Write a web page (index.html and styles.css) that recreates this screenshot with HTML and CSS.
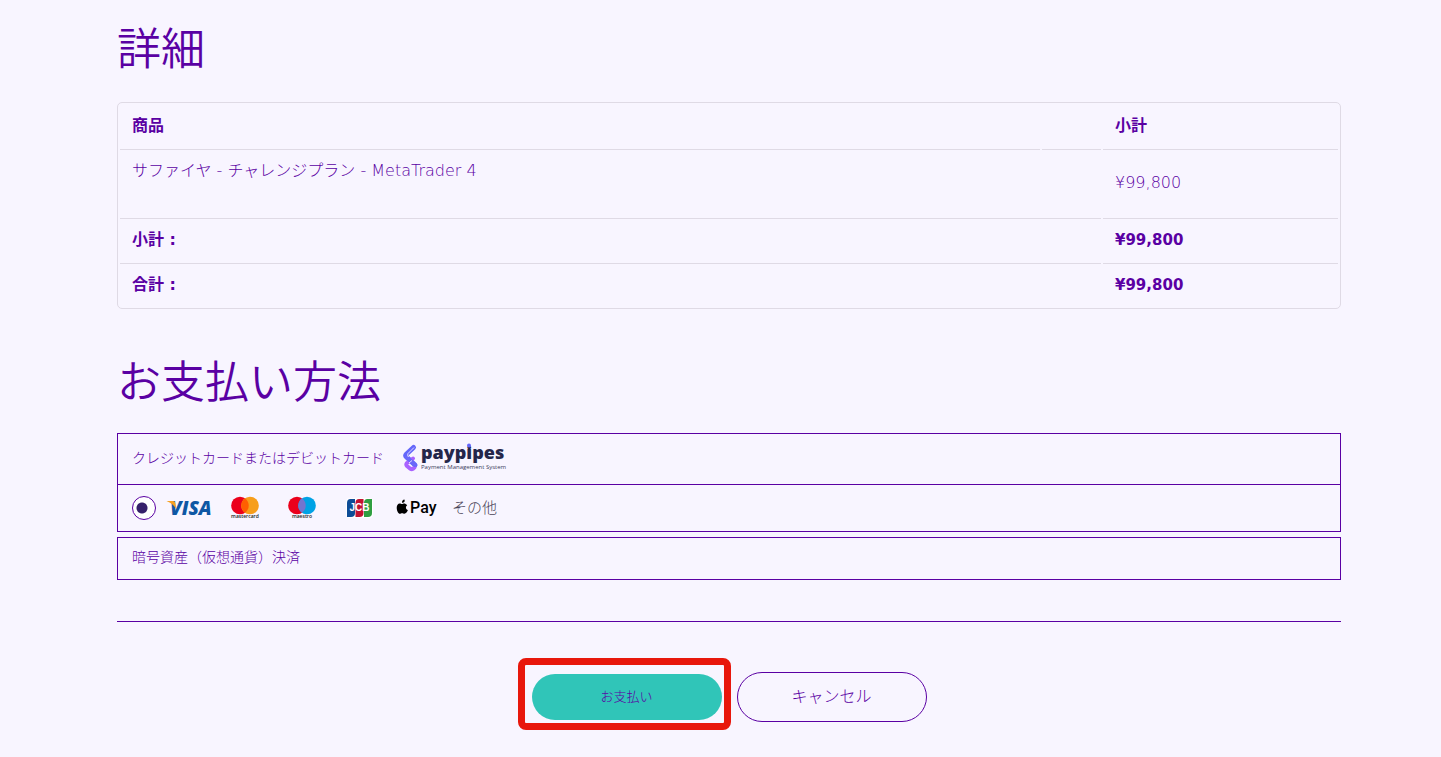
FILE: index.html
```html
<!DOCTYPE html>
<html lang="ja">
<head>
  <meta charset="utf-8">
  <title>お支払い方法</title>
  <link rel="stylesheet" href="styles.css">
</head>
<body>
  <main class="container">
    <h1>詳細</h1>

    <table class="order-table">
      <thead>
        <tr>
          <th>商品</th>
          <th class="col-qty"></th>
          <th class="col-total">小計</th>
        </tr>
      </thead>
      <tbody>
        <tr>
          <td class="product-name">サファイヤ - チャレンジプラン - MetaTrader 4</td>
          <td></td>
          <td>¥99,800</td>
        </tr>
      </tbody>
      <tfoot>
        <tr>
          <th colspan="2">小計 :</th>
          <td>¥99,800</td>
        </tr>
        <tr>
          <th colspan="2">合計 :</th>
          <td>¥99,800</td>
        </tr>
      </tfoot>
    </table>

    <h1>お支払い方法</h1>

    <form>
      <div class="method method-title">
        <label for="pay-card">クレジットカードまたはデビットカード</label>
        <svg class="paypipes" width="110" height="34" viewBox="0 0 110 34" role="img" aria-label="paypipes">
          <path d="M12.500 7.500 L5.500 14 Q4 15.500 5.500 17 L14 25" fill="none" stroke="#6366fa" stroke-width="5" stroke-linecap="round" stroke-linejoin="round"/>
          <path d="M12 18.500 L6 23 Q4.500 24.500 6 26 L9 28.500 Q11.500 30 13.500 27.500" fill="none" stroke="#a962ff" stroke-width="4" stroke-linecap="round" stroke-linejoin="round"/>
          <path d="M6 17.500 L14 25" fill="none" stroke="#6a68fa" stroke-width="4" stroke-linecap="round"/>
          <path d="M13 7.500 L7 13.500 Q6 15.500 7.500 17 M11 20.500 L8 23" fill="none" stroke="#e4dcff" stroke-width="1"/>
          <text class="paypipes-name" x="20" y="19">paypipes</text>
          <circle cx="68" cy="5.500" r="2" fill="#6366fa"/>
          <text class="paypipes-sub" x="20" y="29">Payment Management System</text>
        </svg>
      </div>

      <div class="method method-brands">
        <input type="radio" id="pay-card" name="payment" checked>
        <svg class="visa" width="50" height="24" viewBox="0 0 50 24" role="img" aria-label="VISA">
          <text class="visa-name" x="4" y="19">VISA</text>
          <path d="M0.500 5 H7 Q9 5 9.300 7 L10.300 13 Q7 7.500 0.500 5z" fill="#f7a021"/>
        </svg>
        <svg class="mastercard" width="30" height="24" viewBox="0 0 30 24" role="img" aria-label="mastercard">
          <circle cx="10" cy="9.500" r="8.800" fill="#eb001b"/>
          <circle cx="20" cy="9.500" r="8.800" fill="#f79e1b"/>
          <path d="M15 2.300 a8.800 8.800 0 0 1 0 14.400 a8.800 8.800 0 0 1 0 -14.400z" fill="#ff5f00"/>
          <text class="card-name" x="15" y="22">mastercard</text>
        </svg>
        <svg class="maestro" width="30" height="24" viewBox="0 0 30 24" role="img" aria-label="maestro">
          <circle cx="10" cy="9.500" r="8.800" fill="#eb001b"/>
          <circle cx="20" cy="9.500" r="8.800" fill="#00a2e5"/>
          <path d="M15 2.300 a8.800 8.800 0 0 1 0 14.400 a8.800 8.800 0 0 1 0 -14.400z" fill="#7375cf"/>
          <text class="card-name" x="15" y="22">maestro</text>
        </svg>
        <svg class="jcb" width="27" height="20" viewBox="0 0 27 20" role="img" aria-label="JCB">
          <rect width="27" height="20" rx="4" fill="#fff"/>
          <path d="M4.500 1 H9 V15 Q9 19 5 19 H1 V5 Q1 1 4.500 1z" fill="#0e4c96"/>
          <path d="M13 1 H17.500 V15 Q17.500 19 13.500 19 H9.500 V5 Q9.500 1 13 1z" fill="#c41230"/>
          <path d="M21.500 1 H26 V15 Q26 19 22 19 H18 V5 Q18 1 21.500 1z" fill="#2f9e41"/>
          <text class="jcb-name" x="13.500" y="13">JCB</text>
        </svg>
        <svg class="apple-pay" width="42" height="24" viewBox="0 -2 42 24" role="img" aria-label="Apple Pay">
          <path d="M8.700 3 C8.700 1.400 7.900 1.300 7.400 2 C6.600 2.300 5.900 3.300 6 4.800 C7.300 4.900 8.600 4.300 8.700 3z M11.200 7.300 C10.300 6 8.900 5.500 8.200 5.500 C7.200 5.500 6.700 6.100 6 6.100 C5.300 6.100 4.600 5.500 3.700 5.500 C2 5.600 0.700 7.200 0.700 9.800 C0.700 12.500 2.300 15.800 3.900 15.800 C4.700 15.800 5.100 15.200 6.200 15.200 C7.200 15.200 7.500 15.800 8.400 15.800 C9.900 15.800 11.400 13.500 11.900 12.100 C9.600 11.300 9.200 8.600 11.200 7.300z" fill="#000"/>
          <text class="apple-name" x="14" y="15">Pay</text>
        </svg>
        <span class="others">その他</span>
      </div>

      <div class="method method-crypto">暗号資産（仮想通貨）決済</div>

      <div class="actions">
        <div class="highlight">
          <button type="submit" class="btn btn-pay">お支払い</button>
        </div>
        <button type="button" class="btn btn-cancel">キャンセル</button>
      </div>
    </form>
  </main>
</body>
</html>
```
FILE: styles.css
```css
* {
  box-sizing: border-box;
}
body {
  margin: 0;
  background-color: #f8f5ff;
  color: #5a00a3;
  font-family: "Noto Sans CJK JP", sans-serif;
  font-size: 16px;
  font-weight: 300;
  line-height: 24px;
}
.container {
  margin: 0 100px 0 117px;
  padding-top: 20px;
}
h1 {
  margin: 0 0 28px;
  font-size: 44px;
  font-weight: 350;
  line-height: 52px;
}
.order-table {
  width: 100%;
  margin: 30px 0 44px;
  table-layout: fixed;
  border: 1px solid #dfdae5;
  border-radius: 5px;
  border-collapse: separate;
  border-spacing: 2px;
  font-family: "DejaVu Sans", "Noto Sans CJK JP", sans-serif;
}
.col-qty {
  width: 59px;
}
.col-total {
  width: 235px;
}
.order-table th,
.order-table td {
  padding: 9px 12px;
  border-top: 1px solid #dfdae5;
  text-align: left;
  vertical-align: middle;
}
.order-table tbody td {
  font-family: "DejaVu Sans Light", "DejaVu Sans", "Noto Sans CJK JP", sans-serif;
  font-weight: 200;
}
.order-table thead th {
  border-top: 0;
}
.order-table th,
.order-table tfoot td {
  font-weight: 700;
}
.order-table tfoot td {
  font-size: 15px;
}
.order-table .product-name {
  padding-bottom: 33px;
}
.method {
  display: flex;
  align-items: center;
  padding: 0 14px;
  border: 1px solid #5a00a3;
  font-size: 14px;
}
.method-title {
  height: 52px;
  padding-bottom: 4px;
}
.method-brands {
  height: 47px;
  border-top: 0;
}
.method-crypto {
  height: 43px;
  margin-top: 5px;
  padding-bottom: 6px;
}
.paypipes {
  margin-left: 17px;
}
.paypipes-name {
  font: 800 18px "Open Sans", sans-serif;
  fill: #24264a;
}
.paypipes-sub {
  font: 400 6px "Open Sans", sans-serif;
  fill: #3a3c5c;
}
input[type="radio"] {
  appearance: none;
  width: 24px;
  height: 24px;
  margin: 0;
  border: 1px solid #5a00a3;
  border-radius: 50%;
  background: #fff;
}
input[type="radio"]:checked {
  background: radial-gradient(circle at 9px 11px, #35206b 5px, #fff 6px);
}
.visa {
  margin-left: 10px;
}
.visa-name {
  font: italic 800 19px "Open Sans", sans-serif;
  fill: #0e57a4;
}
.mastercard {
  margin-left: 14px;
}
.maestro {
  margin-left: 27px;
}
.card-name {
  font: 600 5px "Open Sans", sans-serif;
  fill: #231f20;
  text-anchor: middle;
}
.jcb {
  margin-left: 29px;
}
.jcb-name {
  font: 700 10px "Liberation Sans", sans-serif;
  fill: #fff;
  text-anchor: middle;
}
.apple-pay {
  margin-left: 23px;
}
.apple-name {
  font: 500 16px Roboto, sans-serif;
  fill: #000;
}
.others {
  margin-left: 14px;
  padding-bottom: 2px;
  color: #4a4458;
  font-size: 15px;
}
.actions {
  display: flex;
  align-items: center;
  justify-content: center;
  gap: 15px;
  margin-top: 41px;
  padding: 50px 0 35px;
  border-top: 1px solid #5a00a3;
}
.highlight {
  position: relative;
}
.highlight::after {
  content: "";
  position: absolute;
  inset: -16px -9px -10px -14px;
  border: 7px solid #e8170c;
  border-radius: 8px;
  pointer-events: none;
}
.btn {
  display: block;
  width: 190px;
  padding: 0 0 4px;
  border-radius: 25px;
  color: #5a00a3;
  font-family: inherit;
  font-weight: 300;
  cursor: pointer;
}
.btn-pay {
  height: 46px;
  border: 0;
  background-color: #30c5b8;
  font-size: 13px;
}
.btn-cancel {
  height: 50px;
  border: 1px solid #5a00a3;
  background-color: transparent;
  font-size: 16px;
}
```
